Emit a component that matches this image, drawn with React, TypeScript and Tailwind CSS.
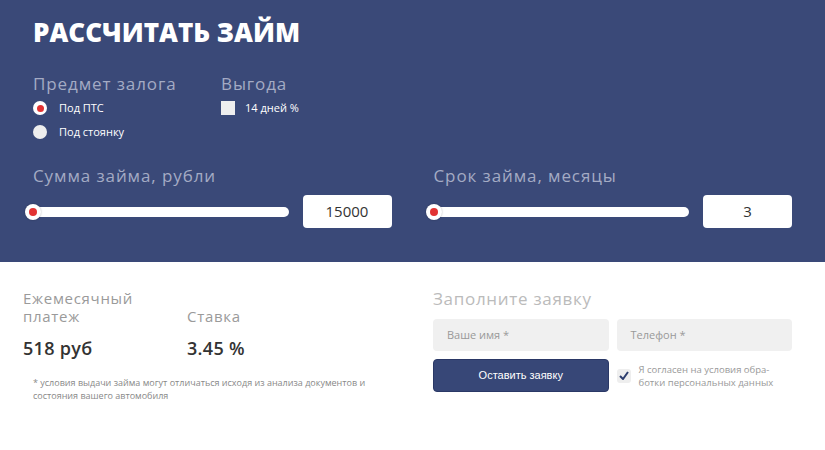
import React from 'react';

const font = { fontFamily: '"Open Sans", "Noto Sans", sans-serif' };

const Slider: React.FC<{ value: string }> = ({ value }) => (
  <div className="flex items-center gap-[14px]">
    <div className="relative ml-[-6px] flex-1 h-[10px] rounded-full bg-white">
      <span className="absolute left-[-2px] top-1/2 -translate-y-1/2 w-[16px] h-[16px] rounded-full bg-white shadow-[0_0_2px_rgba(0,0,0,0.3)] flex items-center justify-center">
        <span className="w-[8px] h-[8px] rounded-full bg-[#e23333]" />
      </span>
    </div>
    <div className="w-[89px] h-[33px] rounded-[4px] bg-white flex items-center justify-center text-[15px] text-[#333]">
      {value}
    </div>
  </div>
);

export default function App() {
  return (
    <div className="w-[825px] h-[450px] bg-white" style={font}>
      <section className="bg-[#3a4978] h-[262px] px-[33px] pt-[16px]">
        <h1 className="text-[26px] font-extrabold text-white leading-[32px]">РАССЧИТАТЬ ЗАЙМ</h1>

        <div className="flex mt-[26px]">
          <div className="w-[188px]">
            <div className="text-[17px] tracking-[0.9px] text-[#a4abc4] leading-[20px]">Предмет залога</div>
            <div className="mt-[7px] flex items-center gap-[12px] text-[11px] text-white leading-[14px]">
              <span className="w-[14px] h-[14px] rounded-full bg-white flex items-center justify-center">
                <span className="w-[7px] h-[7px] rounded-full bg-[#e23333]" />
              </span>
              Под ПТС
            </div>
            <div className="mt-[10px] flex items-center gap-[12px] text-[11px] text-white leading-[14px]">
              <span className="w-[14px] h-[14px] rounded-full bg-[#eeeeee]" />
              Под стоянку
            </div>
          </div>
          <div>
            <div className="text-[17px] tracking-[0.9px] text-[#a4abc4] leading-[20px]">Выгода</div>
            <div className="mt-[7px] flex items-center gap-[10px] text-[11px] text-white leading-[14px]">
              <span className="w-[14px] h-[14px] bg-[#eeeeee]" />
              14 дней %
            </div>
          </div>
        </div>

        <div className="grid grid-cols-2 gap-x-[42px] mt-[27px]">
          <div>
            <div className="text-[17px] tracking-[0.9px] text-[#a4abc4] leading-[20px]">Сумма займа, рубли</div>
            <div className="mt-[9px]">
              <Slider value="15000" />
            </div>
          </div>
          <div>
            <div className="text-[17px] tracking-[0.9px] text-[#a4abc4] leading-[20px]">Срок займа, месяцы</div>
            <div className="mt-[9px]">
              <Slider value="3" />
            </div>
          </div>
        </div>
      </section>

      <section className="flex pt-[27px]">
        <div className="w-[400px] pl-[23px]">
          <div className="flex">
            <div className="w-[164px]">
              <div className="text-[15px] tracking-[0.7px] leading-[18px] text-[#9a9a9a]">Ежемесячный</div>
              <div className="text-[15px] tracking-[0.7px] leading-[18px] text-[#9a9a9a]">платеж</div>
              <div className="mt-[10px] text-[18px] font-semibold tracking-[0.3px] text-[#333]">518 руб</div>
            </div>
            <div className="pt-[18px]">
              <div className="text-[15px] tracking-[0.7px] leading-[18px] text-[#9a9a9a]">Ставка</div>
              <div className="mt-[10px] text-[18px] font-semibold tracking-[0.3px] text-[#333]">3.45 %</div>
            </div>
          </div>
          <p className="mt-[14px] ml-[10px] text-[9px] leading-[13px] text-[#888]">
            * условия выдачи займа могут отличаться исходя из анализа документов и<br />состояния вашего автомобиля
          </p>
        </div>

        <div className="pl-[33px] w-[392px]">
          <div className="text-[17px] tracking-[0.7px] text-[#bbbbbb] leading-[20px]">Заполните заявку</div>
          <div className="grid grid-cols-2 gap-x-[8px] mt-[10px]">
            <div className="h-[32px] rounded-[4px] bg-[#f0f0f0] flex items-center pl-[14px] text-[11px] text-[#999]">Ваше имя *</div>
            <div className="h-[32px] rounded-[4px] bg-[#f0f0f0] flex items-center pl-[14px] text-[11px] text-[#999]">Телефон *</div>
            <button className="mt-[8px] h-[33px] rounded-[4px] bg-[#374777] border border-[#2a3866] text-white text-[11px]" style={{ fontFamily: '"Liberation Sans", Arial, sans-serif' }}>
              Оставить заявку
            </button>
            <div className="mt-[8px] flex items-center gap-[8px]">
              <span className="w-[14px] h-[14px] rounded-[3px] bg-[#eeeeee] flex items-center justify-center">
                <svg width="10" height="9" viewBox="0 0 10 9">
                  <path d="M1 5 L4 8 L9 1" stroke="#2d3d6e" strokeWidth="2" fill="none" />
                </svg>
              </span>
              <span className="text-[9.5px] leading-[13px] text-[#999]">Я согласен на условия обра-<br />ботки персональных данных</span>
            </div>
          </div>
        </div>
      </section>
    </div>
  );
}
